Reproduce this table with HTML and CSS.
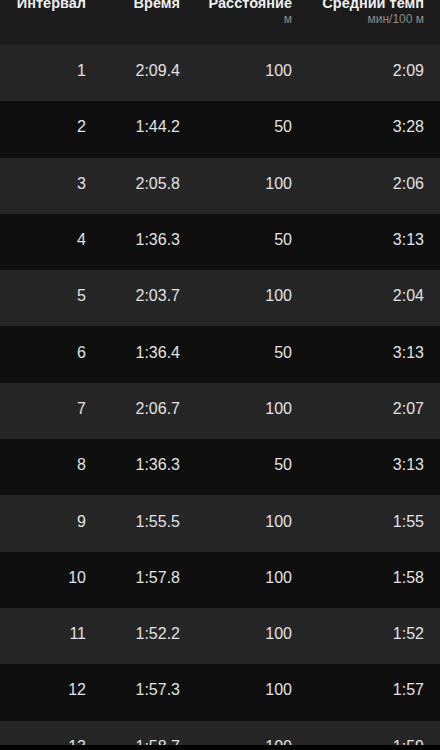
FILE: index.html
```html
<!DOCTYPE html>
<html lang="ru">
<head>
<meta charset="utf-8">
<title>Интервалы</title>
<link rel="stylesheet" href="styles.css">
</head>
<body>
<div class="screen">
  <div class="table">
    <div class="head">
      <div class="hcell"><span class="htitle">Интервал</span></div>
      <div class="hcell"><span class="htitle">Время</span></div>
      <div class="hcell"><span class="htitle">Расстояние</span><span class="hunit">м</span></div>
      <div class="hcell"><span class="htitle">Средний темп</span><span class="hunit">мин/100 м</span></div>
    </div>
    <div class="row light"><span>1</span><span>2:09.4</span><span>100</span><span>2:09</span></div>
    <div class="row dark"><span>2</span><span>1:44.2</span><span>50</span><span>3:28</span></div>
    <div class="row light"><span>3</span><span>2:05.8</span><span>100</span><span>2:06</span></div>
    <div class="row dark"><span>4</span><span>1:36.3</span><span>50</span><span>3:13</span></div>
    <div class="row light"><span>5</span><span>2:03.7</span><span>100</span><span>2:04</span></div>
    <div class="row dark"><span>6</span><span>1:36.4</span><span>50</span><span>3:13</span></div>
    <div class="row light"><span>7</span><span>2:06.7</span><span>100</span><span>2:07</span></div>
    <div class="row dark"><span>8</span><span>1:36.3</span><span>50</span><span>3:13</span></div>
    <div class="row light"><span>9</span><span>1:55.5</span><span>100</span><span>1:55</span></div>
    <div class="row dark"><span>10</span><span>1:57.8</span><span>100</span><span>1:58</span></div>
    <div class="row light"><span>11</span><span>1:52.2</span><span>100</span><span>1:52</span></div>
    <div class="row dark"><span>12</span><span>1:57.3</span><span>100</span><span>1:57</span></div>
    <div class="row light"><span>13</span><span>1:58.7</span><span>100</span><span>1:59</span></div>
  </div>
</div>
</body>
</html>
```
FILE: styles.css
```css
* { box-sizing: border-box; }
html, body {
  margin: 0;
  padding: 0;
  background: #000;
}
body {
  font-family: "Liberation Sans", Arial, sans-serif;
  color: #e2e2e2;
}
.screen {
  width: 440px;
  height: 750px;
  background: #000;
}
.table {
  height: 745px;
  overflow: hidden;
  background: #0e0e0e;
}
.head,
.row {
  display: grid;
  grid-template-columns: 70px 94px 112px 132px;
  padding: 0 16px;
}
.head {
  height: 45px;
  background: #1c1c1c;
  overflow: hidden;
}
.hcell {
  display: flex;
  flex-direction: column;
  align-items: flex-end;
  margin-top: -6px;
}
.htitle {
  font-size: 14.5px;
  line-height: 18px;
  font-weight: bold;
  color: #eeeeee;
  white-space: nowrap;
}
.hunit {
  font-size: 12px;
  line-height: 14px;
  margin-top: 0;
  color: #8c8c8c;
  white-space: nowrap;
}
.row {
  height: 56.3px;
  align-items: center;
  padding-bottom: 4px;
  font-size: 16px;
  line-height: 20px;
}
.row span {
  text-align: right;
}
.light { background: #262626; }
.dark { background: #0f0f0f; }
```
